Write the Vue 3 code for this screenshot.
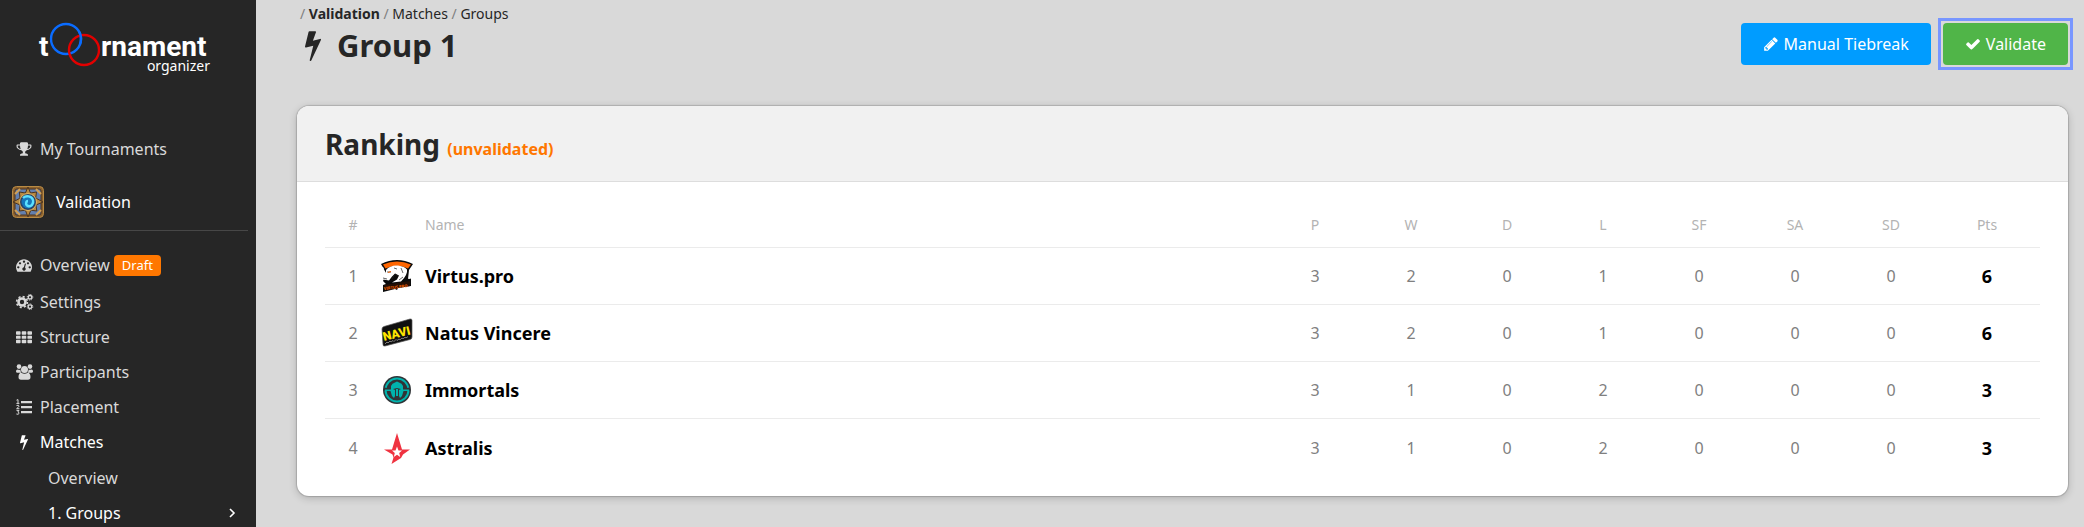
<script setup>
const icons = {
  trophy: 'M522 883q-74-162-74-371h-256v96q0 78 94.5 162t235.5 113zm1078-275v-96h-256q0 209-74 371 141-29 235.5-113t94.5-162zm128-128v128q0 71-41.5 143t-112 130-173 97.5-215.5 44.5q-42 54-95 95-38 34-52.5 72.5t-14.5 89.5q0 54 30.5 91t97.5 37q75 0 133.5 45.5t58.5 114.5v64q0 14-9 23t-23 9h-832q-14 0-23-9t-9-23v-64q0-69 58.5-114.5t133.5-45.5q67 0 97.5-37t30.5-91q0-51-14.5-89.5t-52.5-72.5q-53-41-95-95-113-5-215.5-44.5t-173-97.5-112-130-41.5-143v-128q0-40 28-68t68-28h288v-96q0-66 47-113t113-47h576q66 0 113 47t47 113v96h288q40 0 68 28t28 68z',
  dashboard: 'M384 1152q0-53-37.5-90.5t-90.5-37.5-90.5 37.5-37.5 90.5 37.5 90.5 90.5 37.5 90.5-37.5 37.5-90.5zm192-448q0-53-37.5-90.5t-90.5-37.5-90.5 37.5-37.5 90.5 37.5 90.5 90.5 37.5 90.5-37.5 37.5-90.5zm428 481l101-382q6-26-7.5-48.5t-38.5-29.5-48 6.5-30 39.5l-101 382q-60 5-107 43.5t-63 98.5q-20 77 20 146t117 89 146-20 89-117q16-60-6-117t-72-91zm660-33q0-53-37.5-90.5t-90.5-37.5-90.5 37.5-37.5 90.5 37.5 90.5 90.5 37.5 90.5-37.5 37.5-90.5zm-640-640q0-53-37.5-90.5t-90.5-37.5-90.5 37.5-37.5 90.5 37.5 90.5 90.5 37.5 90.5-37.5 37.5-90.5zm448 192q0-53-37.5-90.5t-90.5-37.5-90.5 37.5-37.5 90.5 37.5 90.5 90.5 37.5 90.5-37.5 37.5-90.5zm320 448q0 261-141 483-19 29-54 29h-1402q-35 0-54-29-141-221-141-483 0-182 71-348t191-286 286-191 348-71 348 71 286 191 191 286 71 348z',
  grid: 'M80 256h352q80 0 80 80v224q0 80-80 80h-352q-80 0-80-80v-224q0-80 80-80zM720 256h352q80 0 80 80v224q0 80-80 80h-352q-80 0-80-80v-224q0-80 80-80zM1360 256h352q80 0 80 80v224q0 80-80 80h-352q-80 0-80-80v-224q0-80 80-80zM80 752h352q80 0 80 80v192q0 80-80 80h-352q-80 0-80-80v-192q0-80 80-80zM720 752h352q80 0 80 80v192q0 80-80 80h-352q-80 0-80-80v-192q0-80 80-80zM1360 752h352q80 0 80 80v192q0 80-80 80h-352q-80 0-80-80v-192q0-80 80-80zM80 1216h352q80 0 80 80v224q0 80-80 80h-352q-80 0-80-80v-224q0-80 80-80zM720 1216h352q80 0 80 80v224q0 80-80 80h-352q-80 0-80-80v-224q0-80 80-80zM1360 1216h352q80 0 80 80v224q0 80-80 80h-352q-80 0-80-80v-224q0-80 80-80z',
  bolt: 'M1333 566q18 20 7 44l-540 1157q-13 25-42 25-4 0-14-2-17-5-25.5-19t-4.5-30l197-808-406 101q-4 1-12 1-18 0-31-11-18-15-13-39l201-825q4-14 16-23t28-9h328q19 0 32 12.5t13 29.5q0 8-5 18l-171 463 396-98q8-2 12-2 19 0 34 15z',
  pencil: 'M491 1536l91-91-235-235-91 91v107h128v128h107zm523-928q0-22-22-22-10 0-17 7l-542 542q-7 7-7 17 0 22 22 22 10 0 17-7l542-542q7-7 7-17zm-54-192l416 416-832 832h-416v-416zm683 96q0 53-37 90l-166 166-416-416 166-165q36-38 90-38 53 0 91 38l235 234q37 39 37 91z',
  check: 'M1671 566q0 40-28 68l-724 724-136 136q-28 28-68 28t-68-28l-136-136-362-362q-28-28-28-68t28-68l136-136q28-28 68-28t68 28l294 295 656-657q28-28 68-28t68 28l136 136q28 28 28 68z'
};

const menu = [
  { label: 'Overview', icon: 'dashboard', badge: 'Draft' },
  { label: 'Settings', icon: 'cogs' },
  { label: 'Structure', icon: 'grid' },
  { label: 'Participants', icon: 'users' },
  { label: 'Placement', icon: 'list' },
  { label: 'Matches', icon: 'bolt', active: true }
];

const statColumns = ['P', 'W', 'D', 'L', 'SF', 'SA', 'SD'];

const ranking = [
  { rank: 1, name: 'Virtus.pro', logo: 'virtus', stats: [3, 2, 0, 1, 0, 0, 0], points: 6 },
  { rank: 2, name: 'Natus Vincere', logo: 'navi', stats: [3, 2, 0, 1, 0, 0, 0], points: 6 },
  { rank: 3, name: 'Immortals', logo: 'immortals', stats: [3, 1, 0, 2, 0, 0, 0], points: 3 },
  { rank: 4, name: 'Astralis', logo: 'astralis', stats: [3, 1, 0, 2, 0, 0, 0], points: 3 }
];
</script>

<template>
  <div class="layout">
    <aside class="sidebar">
      <a href="#" class="brand">
        <svg class="brand-logo" viewBox="0 0 172 40" width="172" height="40">
          <text x="0" y="36" class="brand-text">t</text>
          <circle cx="27" cy="19" r="15" fill="none" stroke="#0a6cff" stroke-width="2.4" />
          <circle cx="45" cy="30" r="15" fill="none" stroke="#e20000" stroke-width="2.4" />
          <path d="M40.2 11.8a15 15 0 0 1 .6 13" fill="none" stroke="#0a6cff" stroke-width="2.4" />
          <text x="62" y="36" class="brand-text">rnament</text>
        </svg>
        <span class="brand-sub">organizer</span>
      </a>

      <nav>
        <a href="#" class="nav-link tournaments">
          <svg class="icon" viewBox="0 0 1792 1792"><path :d="icons.trophy" /></svg>
          My Tournaments
        </a>
        <a href="#" class="current">
          <svg class="game" viewBox="0 0 32 32" width="32" height="32">
            <rect x=".5" y=".5" width="31" height="31" rx="4" fill="#8b612d" stroke="#b98b45" />
            <rect x="3" y="3" width="26" height="26" rx="2" fill="#6480ae" stroke="#4b3320" />
            <path d="M3 8l5-5M24 3l5 5M3 24l5 5M24 29l5-5" stroke="#d0a057" stroke-width="2" />
            <path d="M16 1l2.500 6 6-1-.8 6L31 16l-7 3 .8 6-6-.8L16 31l-2.600-6.800-6 .8.700-6L1 16l7-3.800L7.400 6l6 1z" fill="#b98a42" stroke="#4c341f" />
            <circle cx="16" cy="16" r="8.500" fill="#2b4265" stroke="#dfb462" />
            <circle cx="16" cy="16" r="6.500" fill="#1676bb" />
            <path d="M11 12c3-3 9-2 10 2s-2 7-5 6c-3-1-2-5 0-5" fill="none" stroke="#5be0ff" stroke-width="2.400" />
          </svg>
          Validation
        </a>
        <hr>
        <ul class="menu">
          <li v-for="item in menu" :key="item.label">
            <a href="#" class="nav-link" :class="{ active: item.active, 'has-badge': item.badge }">
              <svg v-if="item.icon === 'cogs'" class="icon" viewBox="0 0 16 16">
                <circle cx="6" cy="8" r="3.5" fill="none" stroke="currentColor" stroke-width="2.6" />
                <circle cx="6" cy="8" r="5.4" fill="none" stroke="currentColor" stroke-width="1.6" stroke-dasharray="2.1 2.14" />
                <g fill="none" stroke="currentColor">
                  <circle cx="14" cy="3.3" r="1.8" stroke-width="1.3" />
                  <circle cx="14" cy="3.3" r="2.8" stroke-dasharray="1.2 1" />
                  <circle cx="14" cy="12.7" r="1.8" stroke-width="1.3" />
                  <circle cx="14" cy="12.7" r="2.8" stroke-dasharray="1.2 1" />
                </g>
              </svg>
              <svg v-else-if="item.icon === 'users'" class="icon" viewBox="0 0 16 16">
                <circle cx="3" cy="2.6" r="2.3" />
                <circle cx="14" cy="2.6" r="2.3" />
                <circle cx="8.5" cy="5.4" r="3.5" />
                <path d="M1.5 5.5C3 6 3.6 6 4.4 5.600q0 2 .9 3.100H2C.7 8.700 0 8.200 0 7.200q0-1.700 1.500-1.700zM15.500 5.500q1.500 0 1.500 1.700c0 1-.7 1.500-2 1.500h-3.300q.9-1.100.9-3.100.9.500 2.900-.1zM5.300 8.800q3.200 2 6.400 0Q14.500 9 14.500 13q0 2.700-2.500 2.700H5q-2.500 0-2.500-2.700 0-4 2.800-4.200z" />
              </svg>
              <svg v-else-if="item.icon === 'list'" class="icon" viewBox="0 0 16 16">
                <path d="M5 2h11v2.200H5zM5 7h11v2.200H5zM5 12h11v2.200H5z" />
                <path d="M.5 1.200 2 .6v3.600M.4 4.400h3M.5 6.600Q3 5.500 3 7.200 2.600 8.300.6 9.700H3.400M.5 11.400H3L1.800 13q1.500.2 1.200 1.500-.6 1.300-2.600.5" fill="none" stroke="currentColor" />
              </svg>
              <svg v-else class="icon" viewBox="0 0 1792 1792"><path :d="icons[item.icon]" /></svg>
              {{ item.label }}
              <span v-if="item.badge" class="badge">{{ item.badge }}</span>
            </a>
          </li>
        </ul>
        <ul class="submenu">
          <li><a href="#">Overview</a></li>
          <li>
            <a href="#" class="active">
              1. Groups
              <svg viewBox="0 0 8 12" width="8" height="12"><path d="M2 2l4 4-4 4" fill="none" stroke="currentColor" stroke-width="1.6" /></svg>
            </a>
          </li>
        </ul>
      </nav>
    </aside>

    <main>
      <header class="page-header">
        <div>
          <div class="breadcrumb">
            <i>/</i> <a href="#"><b>Validation</b></a> <i>/</i> <a href="#">Matches</a> <i>/</i> <a href="#">Groups</a>
          </div>
          <h1>
            <svg viewBox="0 0 1792 1792" width="32" height="32"><path :d="icons.bolt" /></svg>
            Group 1
          </h1>
        </div>
        <div class="actions">
          <button type="button" class="btn btn-primary">
            <svg class="icon" viewBox="0 0 1792 1792"><path :d="icons.pencil" /></svg>
            Manual Tiebreak
          </button>
          <button type="button" class="btn btn-success focused">
            <svg class="icon" viewBox="0 0 1792 1792"><path :d="icons.check" /></svg>
            Validate
          </button>
        </div>
      </header>

      <section class="card">
        <div class="card-header">
          <h2>Ranking <small>(unvalidated)</small></h2>
        </div>
        <div class="card-body">
          <table>
            <thead>
              <tr>
                <th scope="col" class="rank">#</th>
                <td class="logo"></td>
                <th scope="col" class="name">Name</th>
                <th v-for="column in statColumns" :key="column" scope="col" class="stat">{{ column }}</th>
                <th scope="col" class="points">Pts</th>
              </tr>
            </thead>
            <tbody>
              <tr v-for="team in ranking" :key="team.rank">
                <td class="rank">{{ team.rank }}</td>
                <td class="logo">
                  <svg viewBox="0 0 32 32" width="32" height="32">
                    <g v-if="team.logo === 'virtus'">
                      <path d="M0 4Q16-4 32 4l-4 6-1 9 3-1v8l-13 2-1 2-2-1-12 3v-7l3-1-3-3 3-8z" fill="#0b0b0b" />
                      <path d="M0 14V6l3 2zM32 6v12l-4 1 1-9z" fill="#fff" />
                      <path d="M2 4.500Q16-1.500 30 4.500l-3 4Q16 3 4.500 8.500z" fill="#f60" />
                      <path d="M5 10Q9 5 17 5.500q7 1 9 4 1 5-6 12l-9 1 5-3 2-4-4-2-3 3-3 4-6-1-1-3 4-4z" fill="#fff" />
                      <path d="M6 12l4 0M11 19l3-5 3 2M2 18l4 1M13 8l3 1M20 8l2 5M18 20l4-3" fill="none" stroke="#222" stroke-width=".7" />
                      <path d="M7 12.500l3-1" stroke="#f60" />
                      <path d="M3 25l26-4v5L4 30z" fill="#241006" />
                      <text x="3" y="30" class="virtus-text" transform="rotate(-7 3 30)">VIRTUS.PRO</text>
                    </g>
                    <g v-else-if="team.logo === 'navi'">
                      <path d="M1 12q0-2 2-2.500L29 2q2-.5 2 1.500V20q0 2-2 2.500L4 29q-2 .5-2-1.500z" fill="#101010" stroke="#555" stroke-width=".7" />
                      <text x="3" y="24" class="navi-text" transform="rotate(-14 3 24)">NAVI</text>
                      <path d="M4 27l2-2 1 1 2-2 1 1 2-1.500 1 1 2-2 1 1 2-1.500 1 .8 2-1.800 1 .8 2-1.500 1 .6 2-1.300" fill="none" stroke="#aaa" stroke-width=".7" />
                    </g>
                    <g v-else-if="team.logo === 'immortals'">
                      <circle cx="16" cy="16" r="14" fill="#303437" />
                      <circle cx="16" cy="16" r="11.5" fill="none" stroke="#00b3ad" stroke-width="2" />
                      <path d="M3 13.500l7 1v3l-7-1zM29 13.500l-7 1v3l7-1z" fill="#303437" />
                      <path d="M4 15.500h6V12q1-3 4-3.500l2-1 2 1q3 .5 4 3.500v3.500h6V17h-5.500L21 22l-2 2-1-2v-6l2-1-4-1-4 1 2 1v6l-1 2-2-2-1.500-5H4z" fill="#00b3ad" />
                      <path d="M15 15h2v7h-2z" fill="#00b3ad" />
                    </g>
                    <g v-else>
                      <path d="M16 1l5 16.500h8l-7 5-2 3.500-9.500 6 2-6.500-1-3L3 17.500h8z" fill="#ef3340" />
                      <path d="M16 14.500l1.500 4H21l-2.800 2.500 1 4-3.200-2.300-3.200 2.300 1-4L11 18.500h3.500z" fill="#fff" />
                    </g>
                  </svg>
                </td>
                <td class="name">{{ team.name }}</td>
                <td v-for="(value, index) in team.stats" :key="index" class="stat">{{ value }}</td>
                <td class="points">{{ team.points }}</td>
              </tr>
            </tbody>
          </table>
        </div>
      </section>
    </main>
  </div>
</template>

<style>
body {
  margin: 0;
  background: #d9d9d9;
}
</style>

<style scoped>
.layout {
  display: flex;
  height: 100vh;
  font: 16px/24px "Noto Sans", sans-serif;
  color: #262626;
}

a {
  color: inherit;
  text-decoration: none;
}

ul {
  list-style: none;
  margin: 0;
  padding: 0;
}

.icon {
  width: 16px;
  height: 16px;
  flex: none;
  fill: currentColor;
  overflow: visible;
}

/* Sidebar */
.sidebar {
  width: 256px;
  flex: none;
  overflow: hidden;
  background: #262626;
  color: #d9d9d9;
}

.brand {
  display: flex;
  flex-direction: column;
  height: 111px;
  padding: 20px 46px 0 39px;
  color: #fff;
}

.brand-logo {
  flex: none;
  overflow: visible;
}

.brand-text {
  font: bold 28px Roboto, sans-serif;
  fill: #fff;
}

.brand-sub {
  align-self: flex-end;
  margin-top: -3px;
  font-size: 14px;
  line-height: 18px;
}

.nav-link {
  display: flex;
  align-items: center;
  gap: 8px;
  height: 35px;
  padding-left: 16px;
}

.has-badge {
  gap: 4px;
  padding-bottom: 2px;
}

.has-badge .icon {
  margin-right: 4px;
}

.active {
  color: #fff;
}

.current {
  display: flex;
  align-items: center;
  gap: 12px;
  height: 32px;
  margin-top: 20px;
  padding-left: 12px;
  color: #fff;
}

hr {
  height: 1px;
  margin: 12px 8px 16px 0;
  border: 0;
  background: #474747;
}

.badge {
  margin-top: 2px;
  padding: 0 8px;
  border-radius: 4px;
  background: #f70;
  color: #fff;
  font-size: 13px;
  line-height: 21px;
}

.submenu {
  padding-top: 1px;
}

.submenu a {
  display: flex;
  align-items: center;
  justify-content: space-between;
  height: 35px;
  padding: 0 20px 0 48px;
}

/* Content */
main {
  flex: 1;
  min-width: 0;
  padding: 4px 16px 0 41px;
}

.page-header {
  display: flex;
  justify-content: space-between;
  height: 102px;
}

.breadcrumb {
  padding-left: 3px;
  font-size: 14px;
  line-height: 20px;
}

.breadcrumb i {
  color: #808080;
  font-style: normal;
}

h1 {
  display: flex;
  align-items: center;
  gap: 8px;
  margin: 0;
  font-size: 31px;
  line-height: 42px;
}

h1 svg {
  fill: currentColor;
}

.actions {
  display: flex;
  align-items: flex-start;
  gap: 12px;
  padding-top: 19px;
}

.btn {
  position: relative;
  display: flex;
  align-items: center;
  gap: 5px;
  height: 42px;
  padding: 0 22px;
  border: 0;
  border-radius: 4px;
  color: #fff;
  font: inherit;
}

.btn-primary {
  background: #009cff;
}

.btn-success {
  background: #50b548;
}

/* Square focus ring around the rounded button */
.focused::after {
  content: "";
  position: absolute;
  inset: -5px;
  border: 3px solid #7896ff;
}

.card {
  border-radius: 12px;
  background: #fff;
  box-shadow: 0 0 1px 1px rgba(0, 0, 0, 0.15), 0 2px 8px rgba(0, 0, 0, 0.2);
}

.card-header {
  padding: 18px 28px 17px;
  border-bottom: 1px solid #ddd;
  border-radius: 12px 12px 0 0;
  background: #f1f1f1;
}

h2 {
  margin: 0;
  font-size: 28px;
  line-height: 40px;
}

h2 small {
  color: #f70;
  font-size: 16px;
  line-height: 16px;
}

.card-body {
  padding: 20px 28px;
}

table {
  width: 100%;
  table-layout: fixed;
  border-collapse: separate;
  border-spacing: 0;
  color: #808080;
}

th,
td {
  box-sizing: border-box;
  height: 57px;
  padding: 0;
  border-bottom: 1px solid #ebebeb;
  text-align: center;
}

thead th,
thead td {
  height: 46px;
  color: #b3b3b3;
  font-size: 14px;
  font-weight: normal;
}

tbody tr:last-child td {
  border-bottom: 0;
}

.rank {
  width: 56px;
}

.logo {
  width: 44px;
  text-align: left;
}

.logo svg {
  display: block;
}

.name {
  text-align: left;
}

tbody .name,
tbody .points {
  color: #000;
  font-size: 18px;
  font-weight: bold;
}

.stat {
  width: 96px;
}

.points {
  width: 101px;
  padding-right: 5px;
}

.virtus-text {
  font: bold 4px "Noto Sans", sans-serif;
  fill: #f60;
}

.navi-text {
  font: 900 12px Roboto, sans-serif;
  fill: #ffe600;
}
</style>
